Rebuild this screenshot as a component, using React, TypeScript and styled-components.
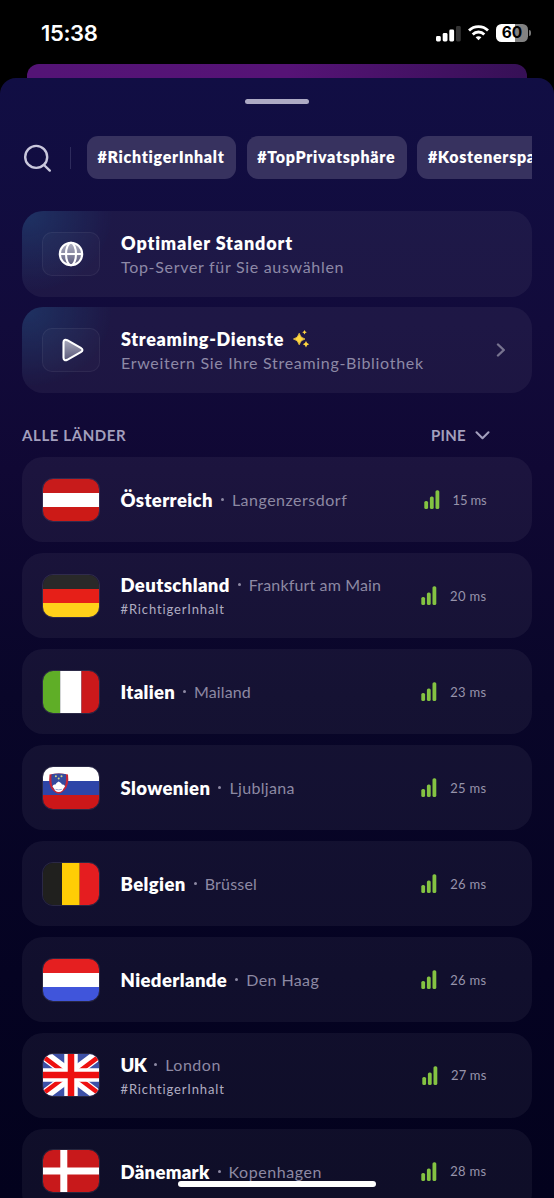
import React from 'react';
import styled, { createGlobalStyle } from 'styled-components';

const GlobalStyle = createGlobalStyle`
  * { box-sizing: border-box; }
  html, body { margin: 0; background: #000; }
  body { font-family: Lato, 'Open Sans', sans-serif; color: #fff; }
`;

const Screen = styled.div`
  position: relative;
  width: 554px;
  height: 1198px;
  overflow: hidden;
  display: flex;
  flex-direction: column;
  background: #000;
`;

const StatusBar = styled.header`
  flex: none;
  height: 64px;
  padding: 2px 23px 0 41px;
  display: flex;
  align-items: center;
  justify-content: space-between;
`;

const Clock = styled.span`
  font: 600 22px/28px Inter, sans-serif;
  letter-spacing: -0.35px;
`;

const StatusIcons = styled.div`
  display: flex;
  align-items: center;
  gap: 7px;
`;

const Battery = styled.div`
  display: flex;
  align-items: center;
  gap: 1px;
`;

const BatteryBody = styled.span`
  width: 32px;
  height: 18px;
  border-radius: 5.5px;
  background: linear-gradient(90deg, #fff 60%, #828282 60%);
  color: #000;
  font: 700 15.5px/18px Inter, sans-serif;
  text-align: center;
`;

const BatteryTip = styled.span`
  width: 2px;
  height: 6px;
  border-radius: 0 2px 2px 0;
  background: #777;
`;

const BackSheet = styled.div`
  flex: none;
  height: 14px;
  margin: 0 27px;
  border-radius: 12px 12px 0 0;
  background: linear-gradient(90deg, #541476 0%, #561376 52%, #361056 100%);
`;

const Sheet = styled.main`
  flex: 1;
  min-height: 0;
  padding: 21px 22px 0;
  border-radius: 16px 16px 0 0;
  background: linear-gradient(180deg, #110e44 0%, #120b3b 22%, #100834 35%, #090629 55%, #050322 80%, #03021d 100%);
  display: flex;
  flex-direction: column;
`;

const Grabber = styled.div`
  flex: none;
  align-self: center;
  width: 64px;
  height: 5px;
  border-radius: 3px;
  background: #adaac4;
`;

const FilterBar = styled.div`
  flex: none;
  margin-top: 32px;
  height: 43px;
  display: flex;
  align-items: center;
`;

const Divider = styled.span`
  flex: none;
  width: 1px;
  height: 22px;
  margin: 0 16px 0 18px;
  background: #2e2b5c;
`;

const Chips = styled.div`
  flex: 1;
  min-width: 0;
  display: flex;
  gap: 10.7px;
  overflow: hidden;
`;

const Chip = styled.span<{ $width: number }>`
  flex: none;
  width: ${p => p.$width}px;
  height: 43px;
  padding-left: 10.5px;
  border-radius: 11px;
  background: #37325f;
  font-size: 16px;
  font-weight: 800;
  line-height: 42px;
  letter-spacing: 0.7px;
  white-space: nowrap;
`;

const Card = styled.section<{ $glow?: boolean }>`
  flex: none;
  height: 85.6px;
  padding: 0 45.5px 0 20px;
  border-radius: 21px;
  display: flex;
  align-items: center;
  background:
    ${p => (p.$glow ? 'radial-gradient(ellipse 84px 76px at 6px 4px, rgba(32, 84, 136, 0.42), rgba(32, 84, 136, 0)),' : '')}
    rgba(255, 255, 255, 0.05);
`;

const Features = styled.div`
  flex: none;
  margin-top: 32px;
  display: grid;
  gap: 10.6px;
`;

const IconTile = styled.div`
  flex: none;
  width: 58px;
  height: 44px;
  margin-right: 21px;
  border: 1px solid rgba(255, 255, 255, 0.06);
  border-radius: 10px;
  background: rgba(255, 255, 255, 0.025);
  display: flex;
  align-items: center;
  justify-content: center;
`;

const FeatureText = styled.div`
  flex: 1;
  padding-top: 2px;
  white-space: nowrap;
`;

const FeatureTitle = styled.div<{ $tracking: number }>`
  display: flex;
  align-items: center;
  gap: 8.5px;
  font-size: 18px;
  font-weight: 800;
  line-height: 24px;
  letter-spacing: ${p => p.$tracking}px;
`;

const FeatureSub = styled.div`
  font-size: 16px;
  line-height: 24px;
  letter-spacing: 0.69px;
  color: #8d89a6;
`;

const ListHead = styled.div`
  flex: none;
  height: 64px;
  padding: 20px 42px 0 0;
  display: flex;
  align-items: center;
  justify-content: space-between;
  font-size: 15px;
  font-weight: 700;
  letter-spacing: 0.6px;
  color: #a39fbd;
`;

const SortButton = styled.span`
  display: flex;
  align-items: center;
  gap: 9px;
  letter-spacing: 0.3px;
`;

const CountryList = styled.div`
  flex: none;
  display: grid;
  gap: 10.4px;
`;

const FlagFrame = styled.div`
  flex: none;
  width: 58px;
  height: 44px;
  margin-right: 20.5px;
  border: 1px solid rgba(255, 255, 255, 0.1);
  border-radius: 11px;
  overflow: hidden;
  svg { display: block; width: 100%; height: 100%; }
`;

const Place = styled.div<{ $tagged: boolean }>`
  flex: 1;
  padding-top: ${p => (p.$tagged ? 2.5 : 0.5)}px;
  white-space: nowrap;
`;

const PlaceLine = styled.div`
  display: flex;
  align-items: center;
  line-height: 24px;
`;

const Country = styled.span<{ $tracking: number }>`
  font-size: 18.5px;
  font-weight: 800;
  letter-spacing: ${p => p.$tracking}px;
`;

const Dot = styled.span`
  flex: none;
  width: 3px;
  height: 3px;
  margin: 0 8px;
  border-radius: 50%;
  background: #8d89a3;
`;

const City = styled.span<{ $tracking: number }>`
  font-size: 16px;
  letter-spacing: ${p => p.$tracking}px;
  color: #8d89a3;
`;

const Tag = styled.div`
  font-size: 13px;
  line-height: 24px;
  letter-spacing: 0.88px;
  color: #b0adc2;
`;

const Ping = styled.div`
  display: flex;
  align-items: center;
  gap: 13px;
  font-size: 13px;
  color: #9794ab;
`;

const PingValue = styled.span<{ $tracking: number }>`
  letter-spacing: ${p => p.$tracking}px;
  white-space: nowrap;
`;

const HomeIndicator = styled.div`
  position: absolute;
  left: 178px;
  bottom: 11px;
  width: 198px;
  height: 6.5px;
  border-radius: 4px;
  background: #fff;
`;

const CellularIcon = () => (
  <svg width="25" height="17" viewBox="0 0 25 17" fill="#fff">
    <rect x="0" y="11" width="4.8" height="5.5" rx="1.4" />
    <rect x="6.7" y="8" width="4.8" height="8.5" rx="1.4" />
    <rect x="13.3" y="4.5" width="4.8" height="12" rx="1.4" />
    <rect x="20" y="1" width="4.8" height="15.5" rx="1.4" fillOpacity="0.2" />
  </svg>
);

const WifiIcon = () => (
  <svg width="21" height="16" viewBox="0 0 21 16" fill="none" stroke="#fff" strokeWidth="2.8">
    <path d="M1 5.5C6.2.4 14.8.4 20 5.5" />
    <path d="M4.7 9.4C7.9 6.2 13.1 6.2 16.3 9.4" />
    <path d="M10.5 15.3 7.6 12.2C9.2 10.8 11.8 10.8 13.4 12.2Z" fill="#fff" stroke="none" />
  </svg>
);

const SearchIcon = () => (
  <svg width="30" height="30" viewBox="0 0 30 30" fill="none" stroke="#c9c7dc" strokeWidth="2.4" strokeLinecap="round">
    <circle cx="14.2" cy="13.9" r="11" />
    <path d="M22 22l5.8 5.6" />
  </svg>
);

const GlobeIcon = () => (
  <svg width="26" height="26" viewBox="0 0 26 26" fill="none" stroke="#fff" strokeWidth="2.100">
    <defs>
      <linearGradient id="globeFill" x1="0" y1="0" x2="0" y2="1">
        <stop offset="0" stopColor="#fff" stopOpacity="0.65" />
        <stop offset="1" stopColor="#fff" stopOpacity="0.25" />
      </linearGradient>
    </defs>
    <circle cx="13" cy="13" r="11.2" fill="url(#globeFill)" />
    <ellipse cx="13" cy="13" rx="5" ry="11.2" />
    <path d="M1.800 13h22.400" />
  </svg>
);

const PlayIcon = () => (
  <svg width="26" height="26" viewBox="0 0 26 26">
    <defs>
      <linearGradient id="playFill" x1="0" y1="0" x2="0" y2="1">
        <stop offset="0" stopColor="#fff" stopOpacity="0.6" />
        <stop offset="1" stopColor="#fff" stopOpacity="0.25" />
      </linearGradient>
    </defs>
    <path
      d="M5.500 5.200C5.500 3 7.300 2.200 9.200 3.200L22.800 10.800C25 12 25 14 22.800 15.200L9.200 22.800C7.300 23.800 5.500 23 5.500 20.800Z"
      fill="url(#playFill)"
      stroke="#fff"
      strokeWidth="2.100"
      strokeLinejoin="round"
    />
  </svg>
);

const SparklesIcon = () => (
  <svg width="17" height="18" viewBox="0 0 17 18" fill="#ffd640">
    <path d="M6.2 3.2Q7.2 8 12 9Q7.2 10 6.2 14.8Q5.2 10 .4 9Q5.2 8 6.2 3.2Z" stroke="#ffd640" strokeWidth=".7" strokeLinejoin="round" />
    <path d="M11.5 0Q12 1.9 13.8 2.3Q12 2.8 11.5 4.6Q11 2.8 9.2 2.3Q11 1.9 11.5 0Z" />
    <path d="M13 11Q13.6 13.6 16.2 14.2Q13.6 14.8 13 17.4Q12.4 14.8 9.8 14.2Q12.4 13.6 13 11Z" />
  </svg>
);

const ChevronRightSvg = styled.svg`
  flex: none;
  margin-right: -19px;
`;

const ChevronRight = () => (
  <ChevronRightSvg width="10" height="14" viewBox="0 0 10 14" fill="none" stroke="#77738f" strokeWidth="2.4" strokeLinecap="round" strokeLinejoin="round">
    <path d="M2 1.5L7.8 7L2 12.5" />
  </ChevronRightSvg>
);

const ChevronDown = () => (
  <svg width="15" height="10" viewBox="0 0 15 10" fill="none" stroke="#a39fbd" strokeWidth="2.1" strokeLinecap="round" strokeLinejoin="round">
    <path d="M1.5 2.3L7.5 8.2L13.5 2.3" />
  </svg>
);

const SignalIcon = () => (
  <svg width="16" height="19" viewBox="0 0 16 19" fill="#84c342">
    <rect x="0.3" y="11" width="3.8" height="8" rx="1.6" />
    <rect x="5.9" y="6.4" width="3.8" height="12.6" rx="1.6" />
    <rect x="11.5" y="0.2" width="3.8" height="18.8" rx="1.6" />
  </svg>
);

const Stripes = ({ colors, vertical, stops }: { colors: string[]; vertical?: boolean; stops?: number[] }) => {
  const size = vertical ? 56 : 42;
  const at = stops ?? [0, size / 3, (size * 2) / 3];
  return (
    <svg viewBox="0 0 56 42" preserveAspectRatio="none">
      {colors.map((c, i) => {
        const start = at[i];
        const length = (at[i + 1] ?? size) - start;
        return vertical
          ? <rect key={i} x={start} y="0" width={length} height="42" fill={c} />
          : <rect key={i} x="0" y={start} width="56" height={length} fill={c} />;
      })}
    </svg>
  );
};

const SloveniaFlag = () => (
  <svg viewBox="0 0 56 42">
    <path fill="#fff" d="M0 0h56v14H0z" />
    <path fill="#2e45a8" d="M0 14h56v14H0z" />
    <path fill="#cc1719" d="M0 28h56v14H0z" />
    <path d="M6.5 7.5Q15.7 5.500 25 7.5Q26.500 19 21 23.500Q18 26.300 15.700 26.800Q13 26.300 10 23.500Q5 19 6.500 7.500Z" fill="#c42638" />
    <path d="M8.600 7.200Q15.700 6 22.900 7.200Q24 18 20 22Q18 24 15.700 24.500Q13 24 11 22Q7.500 18 8.600 7.200Z" fill="#354a9e" />
    <path d="M9.500 19.500Q10 17 12.500 17.500L13.500 16L15.700 14.500L18 16L19 17.500Q21.500 17 22 19.500Q20 22 19.500 23.500Q15.700 26.500 12 23.500Q11.500 22 9.500 19.500Z" fill="#fff" />
    <path d="M12.500 22.300q3.200 1.200 6.400 0" stroke="#8c9bd0" fill="none" strokeWidth=".9" />
    <g fill="#d5d483">
      <circle cx="12.900" cy="9.300" r="1" />
      <circle cx="18.500" cy="9.300" r="1" />
      <circle cx="15.700" cy="11.500" r="1" />
    </g>
  </svg>
);

const UkFlag = () => (
  <svg viewBox="0 0 56 42">
    <path fill="#3d50a6" d="M0 0h56v42H0z" />
    <path d="M0 0L56 42M56 0L0 42" stroke="#fff" strokeWidth="11" />
    <path d="M-2 1L20 17.500M36 24.500L58 41M58 1L36 17.500M20 24.500L-2 41" stroke="#ed1010" strokeWidth="4.600" />
    <path d="M28 0V42M0 21H56" stroke="#fff" strokeWidth="13.500" />
    <path d="M28 0V42M0 21H56" stroke="#ed1010" strokeWidth="6.500" />
  </svg>
);

const DenmarkFlag = () => (
  <svg viewBox="0 0 56 42">
    <path fill="#c8191b" d="M0 0h56v42H0z" />
    <path d="M20.800 0V42M0 21H56" stroke="#fff" strokeWidth="7" />
  </svg>
);

const places = [
  { country: 'Österreich', city: 'Langenzersdorf', ms: 15, msTracking: -0.15, nameTracking: 0.38, cityTracking: 0.5, flag: <Stripes colors={['#c81b1b', '#fff', '#cc1a17']} /> },
  { country: 'Deutschland', city: 'Frankfurt am Main', tag: '#RichtigerInhalt', ms: 20, msTracking: 0.35, nameTracking: 0.4, cityTracking: 0.15, flag: <Stripes colors={['#292929', '#e61f18', '#ffd11a']} /> },
  { country: 'Italien', city: 'Mailand', ms: 23, msTracking: 0.3, nameTracking: 0.3, cityTracking: 0.1, flag: <Stripes vertical stops={[0, 17.2, 38.5]} colors={['#5fae27', '#fff', '#cb191b']} /> },
  { country: 'Slowenien', city: 'Ljubljana', ms: 25, msTracking: 0.3, nameTracking: 0.38, cityTracking: 0.35, flag: <SloveniaFlag /> },
  { country: 'Belgien', city: 'Brüssel', ms: 26, msTracking: 0.3, nameTracking: 0.4, cityTracking: 0.2, flag: <Stripes vertical stops={[0, 19, 36.7]} colors={['#20201e', '#ffcd05', '#e51d20']} /> },
  { country: 'Niederlande', city: 'Den Haag', ms: 26, msTracking: 0.3, nameTracking: 0.4, cityTracking: 0.4, flag: <Stripes colors={['#e51f20', '#fff', '#4055db']} /> },
  { country: 'UK', city: 'London', tag: '#RichtigerInhalt', ms: 27, msTracking: 0.15, nameTracking: -0.6, cityTracking: 0.5, flag: <UkFlag /> },
  { country: 'Dänemark', city: 'Kopenhagen', ms: 28, msTracking: 0.3, nameTracking: 0.3, cityTracking: 0.55, flag: <DenmarkFlag /> },
];

export default function App() {
  return (
    <Screen>
      <GlobalStyle />
      <StatusBar>
        <Clock>15:38</Clock>
        <StatusIcons>
          <CellularIcon />
          <WifiIcon />
          <Battery>
            <BatteryBody>60</BatteryBody>
            <BatteryTip />
          </Battery>
        </StatusIcons>
      </StatusBar>
      <BackSheet />
      <Sheet>
        <Grabber />
        <FilterBar>
          <SearchIcon />
          <Divider />
          <Chips>
            <Chip $width={149}>#RichtigerInhalt</Chip>
            <Chip $width={160}>#TopPrivatsphäre</Chip>
            <Chip $width={150}>#Kostenersparnis</Chip>
          </Chips>
        </FilterBar>
        <Features>
          <Card $glow>
            <IconTile><GlobeIcon /></IconTile>
            <FeatureText>
              <FeatureTitle $tracking={0.85}>Optimaler Standort</FeatureTitle>
              <FeatureSub>Top-Server für Sie auswählen</FeatureSub>
            </FeatureText>
          </Card>
          <Card $glow>
            <IconTile><PlayIcon /></IconTile>
            <FeatureText>
              <FeatureTitle $tracking={0.66}>Streaming-Dienste <SparklesIcon /></FeatureTitle>
              <FeatureSub>Erweitern Sie Ihre Streaming-Bibliothek</FeatureSub>
            </FeatureText>
            <ChevronRight />
          </Card>
        </Features>
        <ListHead>
          <span>ALLE LÄNDER</span>
          <SortButton>PINE <ChevronDown /></SortButton>
        </ListHead>
        <CountryList>
          {places.map(p => (
            <Card key={p.country}>
              <FlagFrame>{p.flag}</FlagFrame>
              <Place $tagged={Boolean(p.tag)}>
                <PlaceLine>
                  <Country $tracking={p.nameTracking}>{p.country}</Country>
                  <Dot />
                  <City $tracking={p.cityTracking}>{p.city}</City>
                </PlaceLine>
                {p.tag && <Tag>{p.tag}</Tag>}
              </Place>
              <Ping>
                <SignalIcon />
                <PingValue $tracking={p.msTracking}>{p.ms} ms</PingValue>
              </Ping>
            </Card>
          ))}
        </CountryList>
      </Sheet>
      <HomeIndicator />
    </Screen>
  );
}
